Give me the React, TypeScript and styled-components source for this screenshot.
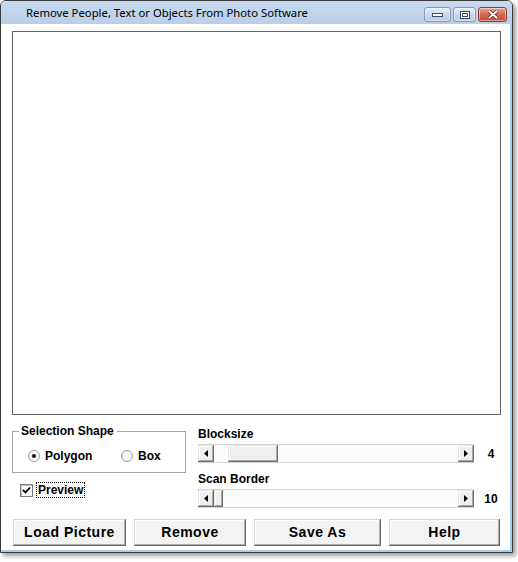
import React from 'react';
import styled, { createGlobalStyle } from 'styled-components';

const Global = createGlobalStyle`
  html, body { margin: 0; padding: 0; background: #ffffff; }
  body { width: 518px; height: 562px; overflow: hidden; font-family: "Liberation Sans", Arial, sans-serif; }
`;

const Stage = styled.div`
  width: 518px;
  height: 562px;
  background: #ffffff;
`;

const Window = styled.div`
  width: 513px;
  height: 553px;
  box-sizing: border-box;
  border: 1px solid #3a3a3a;
  border-radius: 6px 6px 0 0;
  box-shadow: 3px 3px 4px rgba(0, 0, 0, 0.38);
  display: flex;
  flex-direction: column;
  overflow: hidden;
  background: #ffffff;
`;

const TitleBar = styled.div`
  height: 23px;
  flex: none;
  display: flex;
  align-items: flex-start;
  background: linear-gradient(#c7daf0, #b9cee8);
`;

const TitleText = styled.div`
  font-family: "Noto Sans", "Open Sans", sans-serif;
  font-size: 11.3px;
  line-height: 23px;
  color: #000;
  padding-left: 25px;
  white-space: nowrap;
`;

const CaptionGroup = styled.div`
  margin-left: auto;
  margin-right: 5px;
  margin-top: 6px;
  display: flex;
  gap: 2px;
`;

const CaptionButton = styled.div<{ $w: number; $close?: boolean }>`
  width: ${(p) => p.$w}px;
  height: 15px;
  box-sizing: border-box;
  border-radius: 3px;
  border: 1px solid ${(p) => (p.$close ? '#8e3b30' : '#8197b3')};
  background: ${(p) =>
    p.$close
      ? 'linear-gradient(#e9a593, #d46a55 50%, #c44b3a)'
      : 'linear-gradient(#e4eefa, #c9d9ed 50%, #b6cae3)'};
  box-shadow: inset 0 0 0 1px rgba(255, 255, 255, 0.45);
  display: flex;
  align-items: center;
  justify-content: center;
`;

const Client = styled.div`
  flex: 1;
  display: flex;
  flex-direction: column;
  padding: 7px 0 0 11px;
  border-right: 2px solid #a9cdee;
  border-bottom: 2px solid #a9cdee;
`;

const PictureBox = styled.div`
  width: 489px;
  height: 384px;
  box-sizing: border-box;
  border: 1px solid #646464;
  background: #ffffff;
  flex: none;
`;

const Controls = styled.div`
  display: flex;
  gap: 12px;
  margin-top: 9px;
`;

const LeftColumn = styled.div`
  width: 174px;
  display: flex;
  flex-direction: column;
`;

const GroupBox = styled.fieldset`
  margin: 0;
  padding: 11px 0 9px 0;
  border: 1px solid #a8a8a8;
  min-width: 0;
`;

const GroupLegend = styled.legend`
  font-size: 12px;
  font-weight: bold;
  line-height: 14px;
  padding: 0 3px 0 2px;
  margin-left: 6px;
  color: #000;
`;

const RadioRow = styled.div`
  display: flex;
  align-items: center;
  height: 14px;
  padding-left: 15px;
`;

const RadioItem = styled.label<{ $w?: number }>`
  display: flex;
  align-items: center;
  gap: 5px;
  width: ${(p) => (p.$w ? `${p.$w}px` : 'auto')};
  font-size: 12px;
  font-weight: bold;
  color: #000;
`;

const RadioCircle = styled.span<{ $on?: boolean }>`
  width: 12px;
  height: 12px;
  box-sizing: border-box;
  border-radius: 50%;
  border: 1px solid #9a9a9a;
  background: radial-gradient(circle, #ffffff 55%, #e6e6e6);
  display: flex;
  align-items: center;
  justify-content: center;
  &::after {
    content: '';
    width: 4px;
    height: 4px;
    border-radius: 50%;
    background: ${(p) => (p.$on ? '#111' : 'transparent')};
  }
`;

const CheckRow = styled.div`
  display: flex;
  align-items: center;
  margin-top: 9px;
  margin-left: 8px;
  gap: 3px;
`;

const CheckBox = styled.span`
  width: 13px;
  height: 13px;
  box-sizing: border-box;
  border: 1px solid #7a7a7a;
  box-shadow: inset 1px 1px 0 #c4c4c4;
  background: #fff;
  display: flex;
  align-items: center;
  justify-content: center;
`;

const FocusLabel = styled.span`
  font-size: 12px;
  font-weight: bold;
  line-height: 14px;
  padding: 0 1px;
  border: 1px dotted #000;
  color: #000;
`;

const RightColumn = styled.div`
  display: flex;
  flex-direction: column;
`;

const SliderLabel = styled.div<{ $top: number }>`
  font-size: 12px;
  font-weight: bold;
  line-height: 14px;
  margin-top: ${(p) => p.$top}px;
  margin-bottom: 3px;
  color: #000;
`;

const SliderRow = styled.div`
  display: flex;
  align-items: center;
`;

const ScrollBar = styled.div`
  width: 276px;
  height: 19px;
  box-sizing: border-box;
  display: flex;
  background: #fbfbfb;
  border-top: 1px solid #d4d4d4;
  border-bottom: 1px solid #d4d4d4;
`;

const Raised = styled.div`
  background: #efefef;
  box-sizing: border-box;
  box-shadow: inset -1px -1px 0 #6e6e6e, inset 1px 1px 0 #e6e6e6, inset -2px -2px 0 #a8a8a8,
    inset 2px 2px 0 #ffffff;
`;

const ArrowButton = styled(Raised)`
  width: 16px;
  height: 100%;
  flex: none;
  display: flex;
  align-items: center;
  justify-content: center;
`;

const Track = styled.div`
  flex: 1;
  display: flex;
  height: 100%;
`;

const Thumb = styled(Raised)<{ $offset: number; $size: number }>`
  margin-left: ${(p) => p.$offset}px;
  width: ${(p) => p.$size}px;
  height: 100%;
  flex: none;
`;

const SliderValue = styled.div`
  width: 34px;
  text-align: center;
  font-size: 12px;
  font-weight: bold;
  color: #000;
`;

const ButtonRow = styled.div`
  display: flex;
  gap: 8px;
  margin-top: 11px;
  margin-left: 1px;
`;

const PushButton = styled.button<{ $w: number }>`
  width: ${(p) => p.$w}px;
  height: 27px;
  padding: 0 0 2px 0;
  margin: 0;
  border: none;
  background: #f3f3f3;
  font-family: "Liberation Sans", Arial, sans-serif;
  font-size: 14px;
  font-weight: bold;
  letter-spacing: 0.5px;
  color: #000;
  box-shadow: inset -1px -1px 0 #6a6a6a, inset 1px 1px 0 #d6d6d6, inset -2px -2px 0 #a9a9a9,
    inset 2px 2px 0 #ffffff;
`;

const LeftArrow = () => (
  <svg width="4" height="7" viewBox="0 0 4 7">
    <path d="M4 0 L0 3.5 L4 7 Z" fill="#000" />
  </svg>
);
const RightArrow = () => (
  <svg width="4" height="7" viewBox="0 0 4 7">
    <path d="M0 0 L4 3.5 L0 7 Z" fill="#000" />
  </svg>
);

interface SliderProps {
  label: string;
  top: number;
  value: number;
  min: number;
  max: number;
  thumb: number;
}

const Slider = ({ label, top, value, min, max, thumb }: SliderProps) => {
  const trackLen = 276 - 32;
  const offset = Math.round(((value - min) / (max - min)) * (trackLen - thumb));
  return (
    <>
      <SliderLabel $top={top}>{label}</SliderLabel>
      <SliderRow>
        <ScrollBar>
          <ArrowButton>
            <LeftArrow />
          </ArrowButton>
          <Track>
            <Thumb $offset={offset} $size={thumb} />
          </Track>
          <ArrowButton>
            <RightArrow />
          </ArrowButton>
        </ScrollBar>
        <SliderValue>{value}</SliderValue>
      </SliderRow>
    </>
  );
};

export default function App() {
  return (
    <Stage>
      <Global />
      <Window>
        <TitleBar>
          <TitleText>Remove People, Text or Objects From Photo Software</TitleText>
          <CaptionGroup>
            <CaptionButton $w={27}>
              <svg width="11" height="5" viewBox="0 0 11 5">
                <rect x="0.5" y="1.5" width="10" height="3" fill="#fff" stroke="#3d4f66" />
              </svg>
            </CaptionButton>
            <CaptionButton $w={23}>
              <svg width="10" height="8" viewBox="0 0 10 8">
                <rect x="0.5" y="0.5" width="9" height="7" fill="#fff" stroke="#3d4f66" />
                <rect x="2.5" y="2.5" width="5" height="3" fill="none" stroke="#3d4f66" />
              </svg>
            </CaptionButton>
            <CaptionButton $w={29} $close>
              <svg width="12" height="9" viewBox="0 0 12 9">
                <path d="M2 1 L10 8 M10 1 L2 8" stroke="#5a1e16" strokeWidth="3.4" />
                <path d="M2 1 L10 8 M10 1 L2 8" stroke="#fff" strokeWidth="2" />
              </svg>
            </CaptionButton>
          </CaptionGroup>
        </TitleBar>
        <Client>
          <PictureBox />
          <Controls>
            <LeftColumn>
              <GroupBox>
                <GroupLegend>Selection Shape</GroupLegend>
                <RadioRow>
                  <RadioItem $w={93}>
                    <RadioCircle $on />
                    Polygon
                  </RadioItem>
                  <RadioItem>
                    <RadioCircle />
                    Box
                  </RadioItem>
                </RadioRow>
              </GroupBox>
              <CheckRow>
                <CheckBox>
                  <svg width="9" height="9" viewBox="0 0 9 9">
                    <path d="M1 4 L3.5 6.5 L8 1.5" stroke="#000" strokeWidth="1.8" fill="none" />
                  </svg>
                </CheckBox>
                <FocusLabel>Preview</FocusLabel>
              </CheckRow>
            </LeftColumn>
            <RightColumn>
              <Slider label="Blocksize" top={3} value={4} min={2} max={30} thumb={50} />
              <Slider label="Scan Border" top={9} value={10} min={10} max={100} thumb={9} />
            </RightColumn>
          </Controls>
          <ButtonRow>
            <PushButton $w={113}>Load Picture</PushButton>
            <PushButton $w={112}>Remove</PushButton>
            <PushButton $w={127}>Save As</PushButton>
            <PushButton $w={111}>Help</PushButton>
          </ButtonRow>
        </Client>
      </Window>
    </Stage>
  );
}
